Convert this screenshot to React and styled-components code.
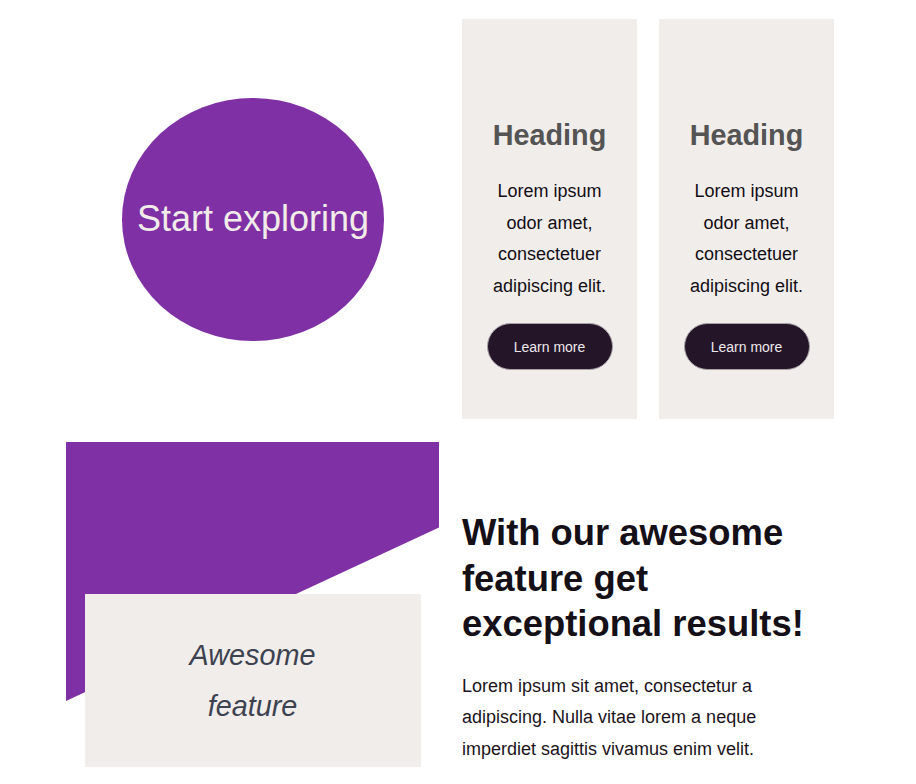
import React from 'react';
import styled, { createGlobalStyle } from 'styled-components';

const GlobalStyle = createGlobalStyle`
  body {
    margin: 0;
    background: #fff;
    font-family: 'Liberation Sans', Arial, sans-serif;
    color: #1c1320;
  }
`;

const Page = styled.div`
  width: 768px;
  margin: 0 0 0 66px;
  padding: 19px 0 0;
  display: flex;
  flex-direction: column;
  gap: 23px;
`;

const TopSection = styled.section`
  display: grid;
  grid-template-columns: 374px 175px 175px;
  column-gap: 22px;
`;

const Hero = styled.div`
  display: flex;
  align-items: center;
  justify-content: center;
`;

const ExploreCircle = styled.a`
  width: 262px;
  height: 243px;
  border-radius: 50%;
  background: #7f30a5;
  color: #f1ece9;
  font-size: 36px;
  display: flex;
  align-items: center;
  justify-content: center;
  white-space: nowrap;
  text-decoration: none;
  cursor: pointer;
`;

const Card = styled.article`
  height: 400px;
  box-sizing: border-box;
  background: #f0edea;
  padding: 100px 20px 0;
  display: flex;
  flex-direction: column;
  align-items: center;
  text-align: center;
`;

const CardHeading = styled.h2`
  margin: 0;
  font-size: 28.8px;
  line-height: 33px;
  font-weight: 700;
  color: #545454;
`;

const CardText = styled.p`
  margin: 24px 0 21px;
  font-size: 18px;
  line-height: 31.6px;
  color: #130d16;
`;

const PillButton = styled.button`
  width: 126px;
  height: 47px;
  border-radius: 24px;
  border: 1px solid #a8a2a8;
  background: #241628;
  color: #eee8ec;
  font-family: inherit;
  font-size: 14px;
  cursor: pointer;
`;

const FeatureSection = styled.section`
  display: grid;
  grid-template-columns: 373px 372px;
  column-gap: 23px;
`;

const FeatureArt = styled.div`
  position: relative;
  padding-top: 152px;

  &::before {
    content: '';
    position: absolute;
    top: 0;
    left: 0;
    right: 0;
    height: 259px;
    background: #7f30a5;
    clip-path: polygon(0 0, 100% 0, 100% 33%, 0 100%);
  }
`;

const FeatureCard = styled.div`
  position: relative;
  width: 336px;
  height: 173px;
  margin: 0 auto;
  background: #f0edea;
  display: flex;
  align-items: center;
  justify-content: center;
`;

const FeatureLabel = styled.p`
  margin: 0;
  max-width: 200px;
  text-align: center;
  font-size: 28.8px;
  line-height: 50.4px;
  font-style: italic;
  color: #3d4250;
`;

const FeatureCopy = styled.div`
  padding-top: 68px;
`;

const FeatureTitle = styled.h1`
  margin: 0;
  font-size: 36.4px;
  line-height: 45.5px;
  font-weight: 700;
  color: #150f18;
`;

const FeatureText = styled.p`
  margin: 24px 0 0;
  font-size: 18px;
  line-height: 31.6px;
  color: #1c1320;
`;

const cards = [
  { id: 1, title: 'Heading', text: 'Lorem ipsum odor amet, consectetuer adipiscing elit.' },
  { id: 2, title: 'Heading', text: 'Lorem ipsum odor amet, consectetuer adipiscing elit.' },
];

export default function App() {
  return (
    <>
      <GlobalStyle />
      <Page>
        <TopSection>
          <Hero>
            <ExploreCircle>Start exploring</ExploreCircle>
          </Hero>
          {cards.map(card => (
            <Card key={card.id}>
              <CardHeading>{card.title}</CardHeading>
              <CardText>{card.text}</CardText>
              <PillButton>Learn more</PillButton>
            </Card>
          ))}
        </TopSection>
        <FeatureSection>
          <FeatureArt>
            <FeatureCard>
              <FeatureLabel>Awesome feature</FeatureLabel>
            </FeatureCard>
          </FeatureArt>
          <FeatureCopy>
            <FeatureTitle>With our awesome feature get exceptional results!</FeatureTitle>
            <FeatureText>
              Lorem ipsum sit amet, consectetur a adipiscing. Nulla vitae lorem a neque imperdiet
              sagittis vivamus enim velit.
            </FeatureText>
          </FeatureCopy>
        </FeatureSection>
      </Page>
    </>
  );
}
